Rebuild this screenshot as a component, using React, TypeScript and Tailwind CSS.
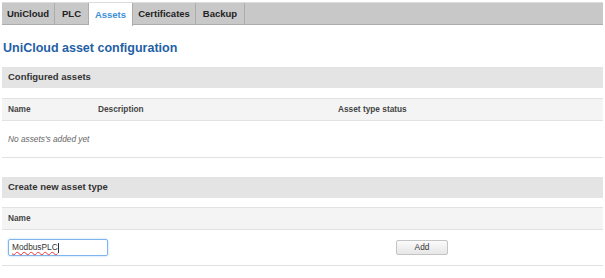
import React from "react";

export default function App() {
  const tabs = [
    { label: "UniCloud", w: 53 },
    { label: "PLC", w: 34 },
    { label: "Assets", w: 44, active: true },
    { label: "Certificates", w: 63 },
    { label: "Backup", w: 49 },
  ];
  return (
    <div
      className="w-[605px] h-[278px] bg-white text-[#333] overflow-hidden"
      style={{ fontFamily: '"Liberation Sans", Arial, sans-serif' }}
    >
      <div className="pt-[2px] px-[2px]">
        <div className="flex h-[23px] bg-[#c8c8c8] border-b border-[#acacac] border-t border-t-[#dcdcdc]">
          {tabs.map((t) => (
            <div
              key={t.label}
              style={{ width: t.w }}
              className={
                t.active
                  ? "flex items-center justify-center pt-[1px] text-[9.5px] font-bold text-[#3d8fd8] bg-white border-r border-[#acacac] -mb-[1px] h-[23px]"
                  : "flex items-center justify-center pt-[1px] text-[9.5px] font-bold text-[#222] border-r border-[#acacac]"
              }
            >
              {t.label}
            </div>
          ))}
        </div>

        <h1 className="mt-[15px] ml-[1px] text-[12.5px] leading-[17px] font-bold text-[#1f5fa5]">
          UniCloud asset configuration
        </h1>

        <div className="mt-[10px] h-[21px] bg-[#e4e4e4] flex items-center pl-[6px] text-[9.5px] font-bold text-[#333]">
          Configured assets
        </div>

        <div className="mt-[10px] h-[23px] bg-[#f4f4f4] border-y border-[#e2e2e2] flex items-center text-[8.3px] font-bold text-[#444]">
          <div className="w-[96px] pl-[6px]">Name</div>
          <div className="w-[240px]">Description</div>
          <div>Asset type status</div>
        </div>
        <div className="h-[37px] border-b border-[#e2e2e2] flex items-center pl-[6px] text-[8.3px] italic text-[#666]">
          No assets's added yet
        </div>

        <div className="mt-[19px] h-[21px] bg-[#e4e4e4] flex items-center pl-[6px] text-[9.5px] font-bold text-[#333]">
          Create new asset type
        </div>

        <div className="mt-[9px] h-[23px] bg-[#f4f4f4] border-y border-[#e2e2e2] flex items-center pl-[6px] text-[8.3px] font-bold text-[#444]">
          Name
        </div>
        <div className="h-[36px] border-b border-[#e2e2e2] flex items-center">
          <div className="ml-[6px] w-[100px] h-[17px] border border-[#7fb5ec] rounded-[2px] shadow-[0_0_2px_#9cc8f3] flex items-center pl-[3px] text-[8.3px] text-[#333]">
            <span className="underline decoration-wavy decoration-[#e33] decoration-[1px]">ModbusPLC</span>
            <span className="w-[1px] h-[10px] bg-[#333]"></span>
          </div>
          <div className="ml-[288px] w-[52px] h-[15px] border border-[#c4c4c4] rounded-[2px] bg-gradient-to-b from-[#fbfbfb] to-[#e6e6e6] flex items-center justify-center text-[8.3px] text-[#333]">
            Add
          </div>
        </div>
      </div>
    </div>
  );
}
